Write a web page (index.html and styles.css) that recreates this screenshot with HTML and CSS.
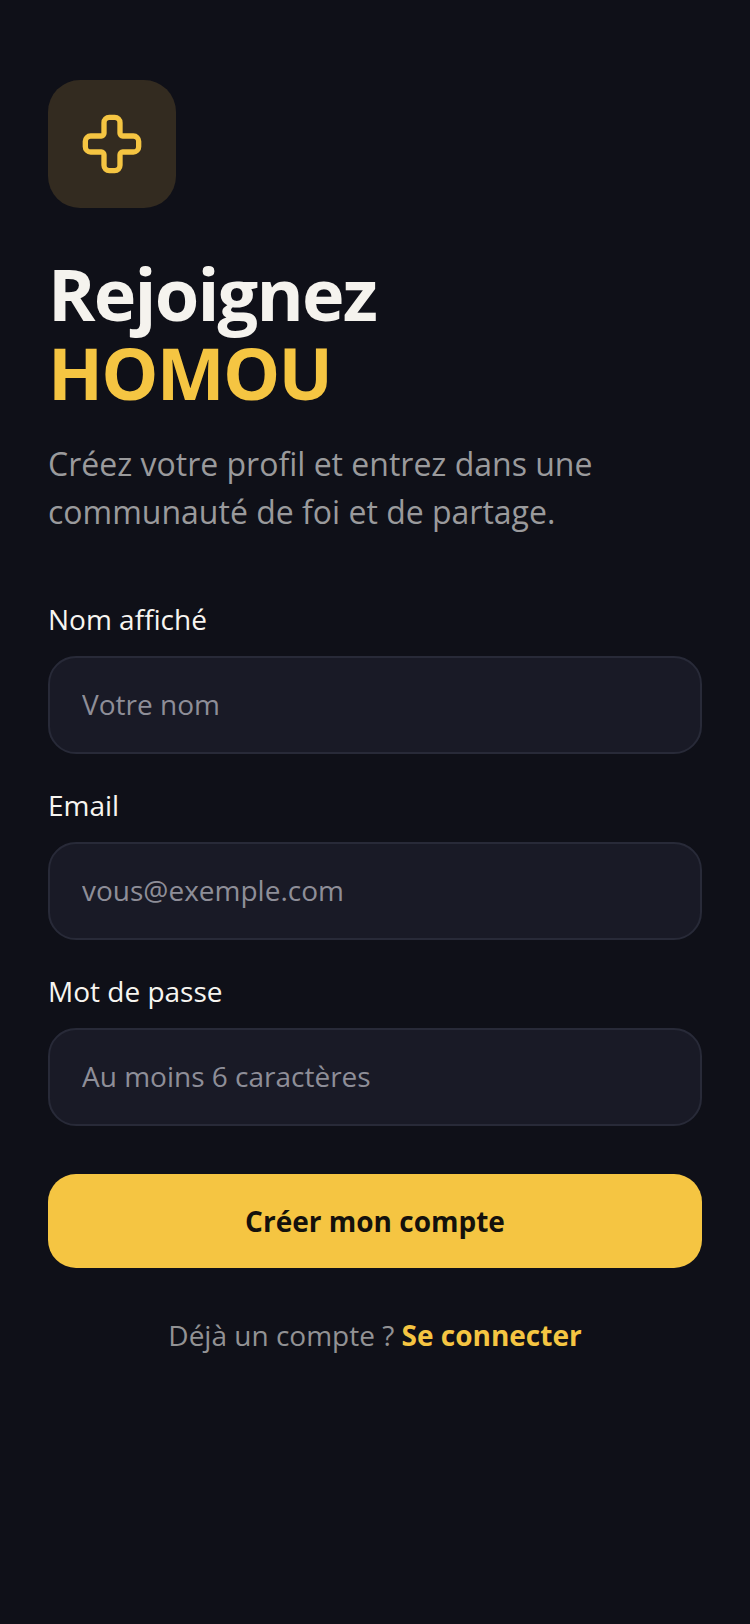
FILE: index.html
```html
<!DOCTYPE html>
<html lang="fr">
<head>
    <meta charset="UTF-8">
    <meta name="viewport" content="width=device-width, initial-scale=1.0">
    <title>Rejoignez HOMOU</title>
    <link rel="stylesheet" href="styles.css">
</head>
<body>
    <div class="container">
        <div class="logo">
            <svg width="64" height="64" viewBox="0 0 24 24" fill="none" stroke="#f5c542" stroke-width="2" stroke-linecap="round" stroke-linejoin="round">
                <path d="M4 9a2 2 0 0 0-2 2v2a2 2 0 0 0 2 2h4a1 1 0 0 1 1 1v4a2 2 0 0 0 2 2h2a2 2 0 0 0 2-2v-4a1 1 0 0 1 1-1h4a2 2 0 0 0 2-2v-2a2 2 0 0 0-2-2h-4a1 1 0 0 1-1-1V4a2 2 0 0 0-2-2h-2a2 2 0 0 0-2 2v4a1 1 0 0 1-1 1z"/>
            </svg>
        </div>
        <h1>Rejoignez<br><span class="brand">HOMOU</span></h1>
        <p class="intro">Créez votre profil et entrez dans une communauté de foi et de partage.</p>
        <form class="form">
            <label class="field">Nom affiché
                <input type="text" placeholder="Votre nom">
            </label>
            <label class="field">Email
                <input type="text" placeholder="vous@exemple.com">
            </label>
            <label class="field">Mot de passe
                <input type="text" placeholder="Au moins 6 caractères">
            </label>
            <button type="button" class="submit">Créer mon compte</button>
        </form>
        <p class="login">Déjà un compte ? <a href="#">Se connecter</a></p>
    </div>
</body>
</html>
```

FILE: styles.css
```css
* {
    box-sizing: border-box;
}

body {
    margin: 0;
    min-height: 1624px;
    background-color: #0f1018;
    font-family: "Open Sans", sans-serif;
}

.container {
    padding: 80px 48px 0;
}

.logo {
    width: 128px;
    height: 128px;
    border-radius: 32px;
    background-color: #332b20;
    display: flex;
    align-items: center;
    justify-content: center;
}

h1 {
    margin: 46px 0 0;
    font-size: 72px;
    line-height: 79px;
    font-weight: 700;
    letter-spacing: -1.8px;
    color: #f5f3ee;
}

.brand {
    color: #f5c542;
}

.intro {
    margin: 28px 0 0;
    font-size: 32px;
    line-height: 48px;
    color: #9a9a9c;
}

.form {
    margin-top: 64px;
    display: flex;
    flex-direction: column;
    gap: 32px;
}

.field {
    display: flex;
    flex-direction: column;
    gap: 18px;
    font-size: 28px;
    line-height: 38px;
    color: #f7f5f0;
}

.field input {
    height: 98px;
    padding: 0 32px 2px;
    border: 2px solid #282a38;
    border-radius: 28px;
    background-color: #191a26;
    font-family: inherit;
    font-size: 28px;
    color: #f7f5f0;
}

.field input::placeholder {
    color: #8e8e98;
    opacity: 1;
}

.submit {
    margin-top: 16px;
    height: 94px;
    border: none;
    border-radius: 28px;
    background-color: #f5c542;
    font-family: inherit;
    font-size: 28px;
    font-weight: 700;
    color: #14110c;
}

.login {
    margin: 48px 0 0;
    text-align: center;
    font-size: 28px;
    line-height: 38px;
    color: #929294;
}

.login a {
    color: #f5c542;
    font-weight: 700;
    text-decoration: none;
}
```
